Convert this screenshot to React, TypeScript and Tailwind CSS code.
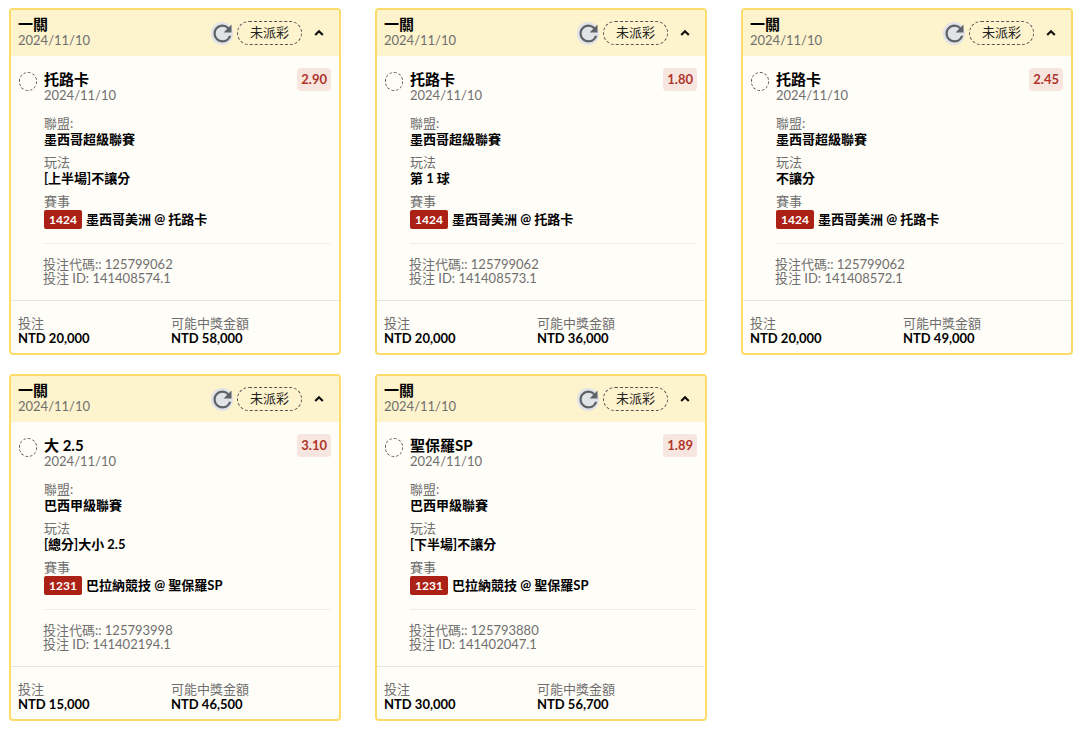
import React from 'react';

const FONT = "font-['Lato','Noto_Sans_CJK_TC','Noto_Sans',sans-serif]";

interface Bet {
  name: string;
  odds: string;
  league: string;
  market: string;
  code: string;
  match: string;
  betCode: string;
  betId: string;
  stake: string;
  payout: string;
}

const bets: Bet[] = [
  { name: '托路卡', odds: '2.90', league: '墨西哥超級聯賽', market: '[上半場]不讓分', code: '1424', match: '墨西哥美洲 @ 托路卡', betCode: '125799062', betId: '141408574.1', stake: 'NTD 20,000', payout: 'NTD 58,000' },
  { name: '托路卡', odds: '1.80', league: '墨西哥超級聯賽', market: '第 1 球', code: '1424', match: '墨西哥美洲 @ 托路卡', betCode: '125799062', betId: '141408573.1', stake: 'NTD 20,000', payout: 'NTD 36,000' },
  { name: '托路卡', odds: '2.45', league: '墨西哥超級聯賽', market: '不讓分', code: '1424', match: '墨西哥美洲 @ 托路卡', betCode: '125799062', betId: '141408572.1', stake: 'NTD 20,000', payout: 'NTD 49,000' },
  { name: '大 2.5', odds: '3.10', league: '巴西甲級聯賽', market: '[總分]大小 2.5', code: '1231', match: '巴拉納競技 @ 聖保羅SP', betCode: '125793998', betId: '141402194.1', stake: 'NTD 15,000', payout: 'NTD 46,500' },
  { name: '聖保羅SP', odds: '1.89', league: '巴西甲級聯賽', market: '[下半場]不讓分', code: '1231', match: '巴拉納競技 @ 聖保羅SP', betCode: '125793880', betId: '141402047.1', stake: 'NTD 30,000', payout: 'NTD 56,700' },
];

const RefreshIcon = () => (
  <svg viewBox="0 0 24 24" className="h-[27px] w-[27px] shrink-0 text-[#5f6368]" fill="currentColor">
    <path d="M17.65 6.35A7.958 7.958 0 0 0 12 4c-4.42 0-7.99 3.58-7.99 8s3.57 8 7.99 8c3.73 0 6.84-2.55 7.73-6h-2.08A5.99 5.99 0 0 1 12 18c-3.31 0-6-2.69-6-6s2.69-6 6-6c1.66 0 3.14.69 4.22 1.78L13 11h7V4l-2.35 2.35z" />
  </svg>
);

const Chevron = () => (
  <svg viewBox="0 0 12 12" className="h-3 w-3" fill="none" stroke="#111" strokeWidth="2.2">
    <path d="M2.2 8 6 4.3 9.8 8" />
  </svg>
);

const Field = ({ label, children }: { label: string; children: React.ReactNode }) => (
  <div className="mb-[7px]">
    <div className="text-[13px] leading-[16px] text-[#6f6f6f]">{label}</div>
    {children}
  </div>
);

const BetCard = ({ bet }: { bet: Bet }) => (
  <div className="flex h-[347px] w-[332px] flex-col overflow-hidden rounded-[4px] border-2 border-[#fbdc6a] bg-[#fffdf7]">
    {/* header */}
    <div className="flex h-[46px] shrink-0 items-center justify-between bg-[#fdf3cc] pl-[7px] pr-[14px]">
      <div className="-mt-[2px]">
        <div className="-mt-[1px] text-[15px] font-bold leading-[17px] text-black">一關</div>
        <div className="text-[13px] leading-[15px] text-[#6f6f6f]">2024/11/10</div>
      </div>
      <div className="flex items-center">
        <div className="flex h-[23px] w-[22px] items-center justify-center rounded-full bg-[#e1e3e6]">
          <RefreshIcon />
        </div>
        <div className="ml-[4px] flex h-[24px] w-[65px] items-center justify-center rounded-full border border-dashed border-[#555] text-[13px] text-[#222]">
          未派彩
        </div>
        <div className="ml-[11px] flex w-[12px] justify-center">
          <Chevron />
        </div>
      </div>
    </div>

    {/* body */}
    <div className="flex-1 pl-[7px] pr-[8px] pt-[12px]">
      <div className="flex items-start justify-between">
        <div className="flex">
          <div className="ml-[1px] mt-[4px] h-[19px] w-[18px] shrink-0 rounded-full border border-dashed border-[#555]" />
          <div className="ml-[7px] pt-[2px]">
            <div className="text-[15px] font-bold leading-[18px] text-black">{bet.name}</div>
            <div className="text-[13px] leading-[14px] text-[#6f6f6f]">2024/11/10</div>
          </div>
        </div>
        <div className="rounded-[4px] bg-[#f7e6df] px-[4px] py-[2px] text-[13px] font-bold leading-[19px] text-[#b0352b]">
          {bet.odds}
        </div>
      </div>

      <div className="ml-[26px] mt-[13px]">
        <Field label="聯盟:">
          <div className="text-[13px] font-bold leading-[16px] text-black">{bet.league}</div>
        </Field>
        <Field label="玩法">
          <div className="text-[13px] font-bold leading-[16px] text-black">{bet.market}</div>
        </Field>
        <div className="text-[13px] leading-[16px] text-[#6f6f6f]">賽事</div>
        <div className="mt-[1px] flex items-center">
          <span className="flex h-[19px] w-[38px] items-center justify-center rounded-[2px] bg-[#ab2115] text-[12px] font-bold text-white">
            {bet.code}
          </span>
          <span className="ml-[4px] text-[13px] font-bold leading-[19px] text-black">{bet.match}</span>
        </div>

        <div className="mt-[14px] border-t border-[#efede8]" />
        <div className="-ml-[1px] mt-[13px] text-[13px] leading-[14px] text-[#6f6f6f]">
          <div>投注代碼:: {bet.betCode}</div>
          <div>投注 ID: {bet.betId}</div>
        </div>
      </div>
    </div>

    {/* footer */}
    <div className="flex h-[53px] shrink-0 border-t border-[#e6e4de] pl-[7px] pr-[8px] pt-[14px]">
      <div className="w-[153px]">
        <div className="text-[13px] leading-[16px] text-[#6f6f6f]">投注</div>
        <div className="text-[13px] font-bold leading-[15px] text-black">{bet.stake}</div>
      </div>
      <div>
        <div className="text-[13px] leading-[16px] text-[#6f6f6f]">可能中獎金額</div>
        <div className="text-[13px] font-bold leading-[15px] text-black">{bet.payout}</div>
      </div>
    </div>
  </div>
);

export default function App() {
  return (
    <div className={`${FONT} h-[739px] w-[1080px] overflow-hidden bg-white pl-[9px] pt-[8px]`}>
      <div className="grid grid-cols-[332px_332px_332px] gap-x-[34px] gap-y-[19px]">
        {bets.map((bet) => (
          <BetCard key={bet.betId} bet={bet} />
        ))}
      </div>
    </div>
  );
}
